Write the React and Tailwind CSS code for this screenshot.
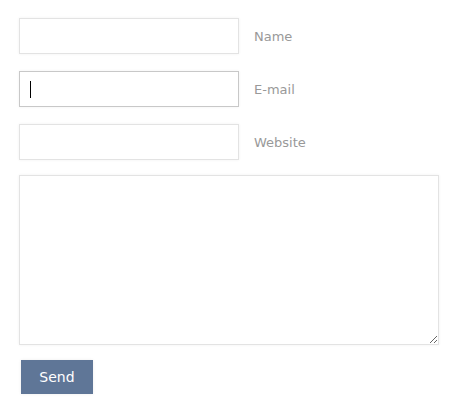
export default function App() {
  const fields = ["Name", "E-mail", "Website"];
  return (
    <div className="min-h-screen bg-white pl-[19px] pt-[18px] font-['DejaVu_Sans',Verdana,sans-serif]">
      <div className="flex flex-col gap-[17px]">
        {fields.map((label, i) => (
          <div key={label} className="flex items-center gap-[15px]">
            <div
              className={
                "relative h-[36px] w-[220px] bg-white border shadow-[0_0_3px_rgba(0,0,0,0.06)] " +
                (i === 1 ? "border-[#c8c8c8]" : "border-[#e3e3e3]")
              }
            >
              {i === 1 && <span className="absolute left-[10px] top-[9px] h-[17px] w-px bg-black" />}
            </div>
            <span className="pt-px text-[13px] leading-none text-[#999999]">{label}</span>
          </div>
        ))}
      </div>
      <textarea className="mt-[15px] block h-[170px] w-[420px] border border-[#e3e3e3] bg-white shadow-[0_0_3px_rgba(0,0,0,0.06)] outline-none" />
      <button className="ml-[2px] mt-[15px] h-[34px] w-[72px] bg-[#5f7697] text-[14px] text-white shadow-[0_0_3px_rgba(0,0,0,0.08)]">
        Send
      </button>
    </div>
  );
}
